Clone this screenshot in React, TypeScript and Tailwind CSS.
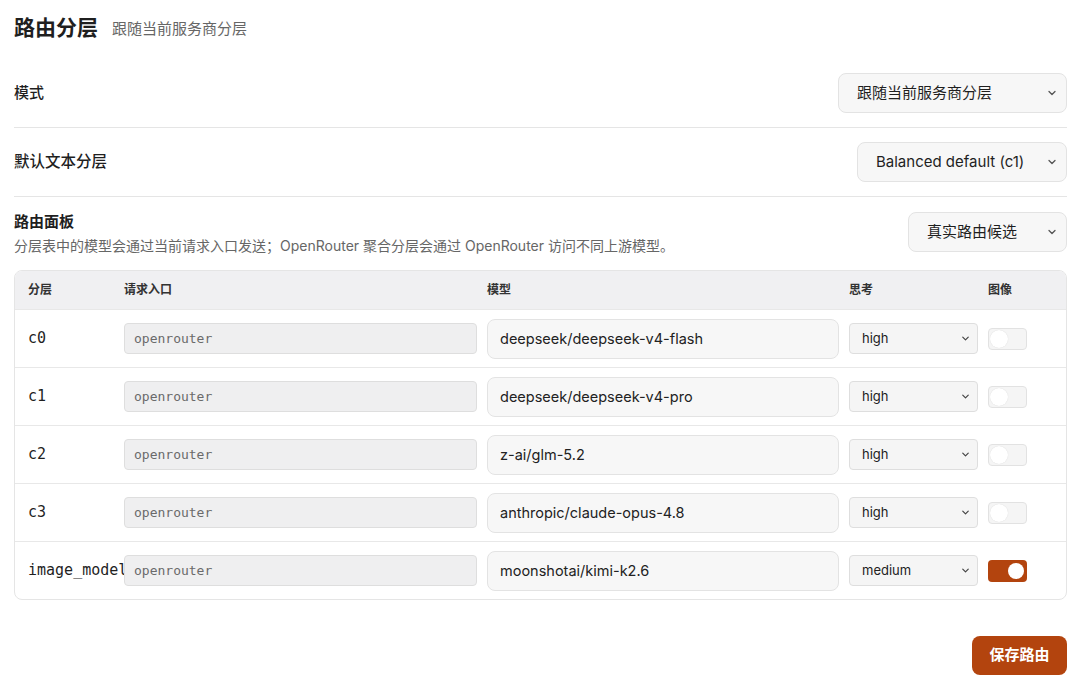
import React from "react";

const sans = `font-['Inter','Noto_Sans_CJK_SC',sans-serif]`;

function Chevron({ className = "" }: { className?: string }) {
  return (
    <svg viewBox="0 0 12 12" className={className} fill="none" stroke="currentColor" strokeWidth="1.3" strokeLinecap="round" strokeLinejoin="round">
      <path d="M3 4.5 L6 7.5 L9 4.5" />
    </svg>
  );
}

function BigSelect({ label, width }: { label: string; width: string }) {
  return (
    <div className={`${width} h-[40px] rounded-[8px] border border-[#e3e3e3] bg-[#f7f7f7] flex items-center justify-between pl-[18px] pr-[8px] text-[15px] text-[#1f1f1f]`}>
      <span>{label}</span>
      <Chevron className="w-[12px] h-[12px] text-[#555]" />
    </div>
  );
}

function Toggle({ on }: { on: boolean }) {
  return on ? (
    <div className="w-[39px] h-[22px] rounded-[4px] bg-[#b3440e] flex items-center justify-end pr-[3px]">
      <div className="w-[16px] h-[16px] rounded-full bg-white" />
    </div>
  ) : (
    <div className="w-[39px] h-[22px] rounded-[4px] bg-[#f5f5f5] border border-[#e2e2e2] flex items-center pl-[1px]">
      <div className="w-[18px] h-[18px] rounded-full bg-white shadow-[0_0_1px_rgba(0,0,0,0.15)]" />
    </div>
  );
}

const rows = [
  { tier: "c0", model: "deepseek/deepseek-v4-flash", think: "high", img: false },
  { tier: "c1", model: "deepseek/deepseek-v4-pro", think: "high", img: false },
  { tier: "c2", model: "z-ai/glm-5.2", think: "high", img: false },
  { tier: "c3", model: "anthropic/claude-opus-4.8", think: "high", img: false },
  { tier: "image_model", model: "moonshotai/kimi-k2.6", think: "medium", img: true },
];

const grid = "grid grid-cols-[86px_353px_352px_129px_39px] gap-x-[10px] pl-[13px] items-center";

export default function App() {
  return (
    <div className={`${sans} w-[1080px] h-[698px] bg-white text-[#1f1f1f] pl-[14px] pr-[13px] pt-[14px]`}>
      <div className="h-[26px] flex items-center gap-[14px]">
        <h1 className="text-[21px] font-bold leading-none">路由分层</h1>
        <span className="text-[15px] text-[#666] leading-none pt-[3px]">跟随当前服务商分层</span>
      </div>

      <div className="mt-[19px] py-[14px] border-b border-[#e5e5e5] flex items-center justify-between">
        <span className="text-[15px] font-medium">模式</span>
        <BigSelect label="跟随当前服务商分层" width="w-[229px]" />
      </div>

      <div className="py-[14px] border-b border-[#e5e5e5] flex items-center justify-between">
        <span className="text-[15.5px] font-medium">默认文本分层</span>
        <BigSelect label="Balanced default (c1)" width="w-[210px]" />
      </div>

      <div className="pt-[15px] pb-[16px] flex items-start justify-between">
        <div>
          <div className="text-[15px] font-bold leading-[20px]">路由面板</div>
          <div className="text-[14px] text-[#666] leading-[16px] mt-[6px]">
            分层表中的模型会通过当前请求入口发送；OpenRouter 聚合分层会通过 OpenRouter 访问不同上游模型。
          </div>
        </div>
        <BigSelect label="真实路由候选" width="w-[159px]" />
      </div>

      <div className="border border-[#e5e5e5] rounded-[8px] overflow-hidden">
        <div className={`${grid} h-[38px] bg-[#f0f0f2] text-[12px] font-bold text-[#333]`}>
          <span>分层</span>
          <span>请求入口</span>
          <span>模型</span>
          <span>思考</span>
          <span>图像</span>
        </div>
        {rows.map((r) => (
          <div key={r.tier} className={`${grid} h-[58px] border-t border-[#e8e8e8]`}>
            <span className="font-['DejaVu_Sans_Mono',monospace] text-[15px] whitespace-nowrap">{r.tier}</span>
            <div className="relative h-[31px] rounded-[4px] border border-[#dedede] bg-[#efeff0] flex items-center pl-[9px] font-['DejaVu_Sans_Mono',monospace] text-[13px] text-[#6a6a6a]">
              openrouter
            </div>
            <div className="h-[40px] rounded-[8px] border border-[#e3e3e3] bg-[#f7f7f7] flex items-center pl-[12px] text-[14.5px] text-[#222]">
              {r.model}
            </div>
            <div className="h-[31px] rounded-[4px] border border-[#dedede] bg-[#f5f5f5] flex items-center justify-between pl-[12px] pr-[6px] text-[13px] text-[#222]">
              <span>{r.think}</span>
              <Chevron className="w-[11px] h-[11px] text-[#444]" />
            </div>
            <Toggle on={r.img} />
          </div>
        ))}
      </div>

      <div className="flex justify-end mt-[36px]">
        <button className="w-[95px] h-[39px] rounded-[8px] bg-[#b3440e] text-white text-[15px] font-bold">
          保存路由
        </button>
      </div>
    </div>
  );
}
